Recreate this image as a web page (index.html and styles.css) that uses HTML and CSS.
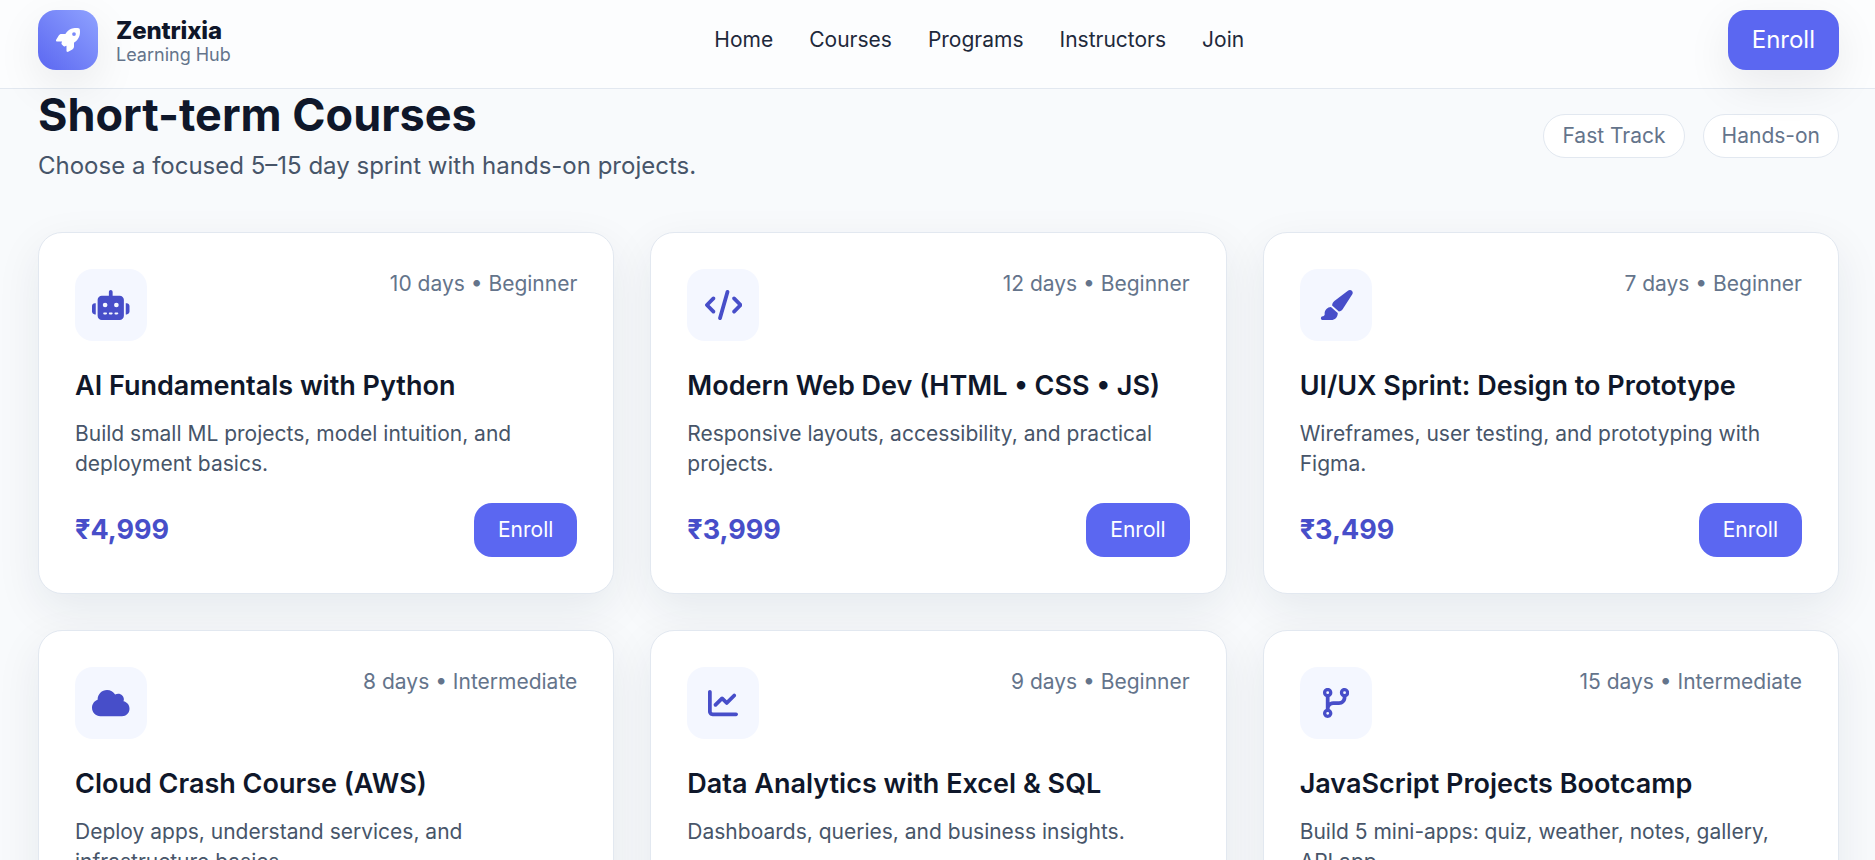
FILE: index.html
```html
<!DOCTYPE html>
<html lang="en">
<head>
<meta charset="utf-8">
<title>Zentrixia Learning Hub</title>
<link rel="stylesheet" href="styles.css">
</head>
<body>
<header class="header">
  <div class="container header-row">
    <a class="brand">
      <span class="logo"><svg viewBox="0 0 512 512" width="24" height="24"><path d="M156.6 384.9L125.7 354c-8.5-8.5-11.5-20.8-7.7-32.2c3-8.9 7-20.5 11.8-33.8L24 288c-8.6 0-16.6-4.6-20.9-12.1s-4.2-16.7 .2-24.1l52.5-88.5c13-21.9 36.5-35.3 61.9-35.3l82.3 0c2.4-4 4.8-7.7 7.2-11.3C289.1-4.1 411.1-8.1 483.9 5.3c11.6 2.1 20.6 11.2 22.8 22.8c13.4 72.9 9.3 194.8-111.4 276.7c-3.5 2.4-7.3 4.8-11.3 7.2v82.3c0 25.4-13.4 49-35.3 61.9l-88.5 52.5c-7.4 4.4-16.6 4.5-24.1 .2s-12.1-12.2-12.1-20.9V380.8c-14.1 4.9-26.4 8.9-35.7 11.9c-11.2 3.6-23.4 .5-31.8-7.8zM384 168a40 40 0 1 0 0-80 40 40 0 1 0 0 80z"/></svg></span>
      <span class="brand-text">
        <span class="brand-name">Zentrixia</span>
        <span class="brand-sub">Learning Hub</span>
      </span>
    </a>
    <nav class="nav">
      <a>Home</a><a>Courses</a><a>Programs</a><a>Instructors</a><a>Join</a>
    </nav>
    <button class="btn btn-lg">Enroll</button>
  </div>
</header>
<main class="container">
  <div class="section-head">
    <div>
      <h2 class="section-title">Short-term Courses</h2>
      <p class="section-sub">Choose a focused 5–15 day sprint with hands-on projects.</p>
    </div>
    <div class="chips"><span class="chip">Fast Track</span><span class="chip">Hands-on</span></div>
  </div>
  <div class="grid">
    <article class="card">
      <div class="card-top">
        <div class="icon"><svg viewBox="0 0 640 512"><path d="M320 0c17.7 0 32 14.3 32 32V96H472c39.8 0 72 32.2 72 72V440c0 39.8-32.2 72-72 72H168c-39.8 0-72-32.2-72-72V168c0-39.8 32.2-72 72-72H288V32c0-17.7 14.3-32 32-32zM208 384c-8.8 0-16 7.2-16 16s7.2 16 16 16h32c8.8 0 16-7.2 16-16s-7.2-16-16-16H208zm96 0c-8.8 0-16 7.2-16 16s7.2 16 16 16h32c8.8 0 16-7.2 16-16s-7.2-16-16-16H304zm96 0c-8.8 0-16 7.2-16 16s7.2 16 16 16h32c8.8 0 16-7.2 16-16s-7.2-16-16-16H400zM264 256a40 40 0 1 0 -80 0 40 40 0 1 0 80 0zm152 40a40 40 0 1 0 0-80 40 40 0 1 0 0 80zM48 224H64V416H48c-26.5 0-48-21.5-48-48V272c0-26.5 21.5-48 48-48zm544 0c26.5 0 48 21.5 48 48v96c0 26.5-21.5 48-48 48H576V224h16z"/></svg></div>
        <span class="meta">10 days • Beginner</span>
      </div>
      <h3 class="card-title">AI Fundamentals with Python</h3>
      <p class="card-desc">Build small ML projects, model intuition, and deployment basics.</p>
      <div class="card-foot"><span class="price">₹4,999</span><button class="btn">Enroll</button></div>
    </article>
    <article class="card">
      <div class="card-top">
        <div class="icon"><svg viewBox="0 0 640 512"><path d="M392.8 1.2c-17-4.9-34.7 5-39.6 22l-128 448c-4.9 17 5 34.7 22 39.6s34.7-5 39.6-22l128-448c4.9-17-5-34.7-22-39.6zm80.6 120.1c-12.5 12.5-12.5 32.8 0 45.3L562.7 256l-89.4 89.4c-12.5 12.5-12.5 32.8 0 45.3s32.8 12.5 45.3 0l112-112c12.5-12.5 12.5-32.8 0-45.3l-112-112c-12.5-12.5-32.8-12.5-45.3 0zm-306.7 0c-12.5-12.5-32.8-12.5-45.3 0l-112 112c-12.5 12.5-12.5 32.8 0 45.3l112 112c12.5 12.5 32.8 12.5 45.3 0s12.5-32.8 0-45.3L77.3 256l89.4-89.4c12.5-12.5 12.5-32.8 0-45.3z"/></svg></div>
        <span class="meta">12 days • Beginner</span>
      </div>
      <h3 class="card-title">Modern Web Dev (HTML • CSS • JS)</h3>
      <p class="card-desc">Responsive layouts, accessibility, and practical projects.</p>
      <div class="card-foot"><span class="price">₹3,999</span><button class="btn">Enroll</button></div>
    </article>
    <article class="card">
      <div class="card-top">
        <div class="icon"><svg viewBox="0 0 576 512"><path d="M339.3 367.1c27.3-3.9 51.9-19.4 67.2-42.9L568.2 74.1c12.6-19.5 9.4-45.3-7.6-61.2S517.7-4.4 499.1 9.6L262.4 187.2c-24 18-38.2 46.1-38.4 76.1L339.3 367.1zm-19.6 25.4l-116-104.4C143.9 290.3 96 339.6 96 400c0 3.9 .2 7.8 .6 11.6C98.4 429.1 86.4 448 68.8 448H64c-17.7 0-32 14.3-32 32s14.3 32 32 32H208c61.9 0 112-50.1 112-112c0-2.5-.1-5-.2-7.5z"/></svg></div>
        <span class="meta">7 days • Beginner</span>
      </div>
      <h3 class="card-title">UI/UX Sprint: Design to Prototype</h3>
      <p class="card-desc">Wireframes, user testing, and prototyping with Figma.</p>
      <div class="card-foot"><span class="price">₹3,499</span><button class="btn">Enroll</button></div>
    </article>
    <article class="card">
      <div class="card-top">
        <div class="icon"><svg viewBox="0 0 640 512"><path d="M0 336c0 79.5 64.5 144 144 144H512c70.7 0 128-57.3 128-128c0-61.9-44-113.6-102.4-125.4c4.1-10.7 6.4-22.4 6.4-34.6c0-53-43-96-96-96c-19.7 0-38.1 6-53.3 16.2C367 64.2 315.3 32 256 32C167.6 32 96 103.6 96 192c0 2.7 .1 5.4 .2 8.1C40.2 219.8 0 273.2 0 336z"/></svg></div>
        <span class="meta">8 days • Intermediate</span>
      </div>
      <h3 class="card-title">Cloud Crash Course (AWS)</h3>
      <p class="card-desc">Deploy apps, understand services, and infrastructure basics.</p>
    </article>
    <article class="card">
      <div class="card-top">
        <div class="icon"><svg viewBox="0 0 512 512"><path d="M64 64c0-17.7-14.3-32-32-32S0 46.3 0 64V400c0 44.2 35.8 80 80 80H480c17.7 0 32-14.3 32-32s-14.3-32-32-32H80c-8.8 0-16-7.2-16-16V64zm406.6 86.6c12.5-12.5 12.5-32.8 0-45.3s-32.8-12.5-45.3 0L320 210.7l-57.4-57.4c-12.5-12.5-32.8-12.5-45.3 0l-112 112c-12.5 12.5-12.5 32.8 0 45.3s32.8 12.5 45.3 0L240 221.3l57.4 57.4c12.5 12.5 32.8 12.5 45.3 0l128-128z"/></svg></div>
        <span class="meta">9 days • Beginner</span>
      </div>
      <h3 class="card-title">Data Analytics with Excel &amp; SQL</h3>
      <p class="card-desc">Dashboards, queries, and business insights.</p>
    </article>
    <article class="card">
      <div class="card-top">
        <div class="icon"><svg viewBox="0 0 448 512"><path d="M80 104a24 24 0 1 0 0-48 24 24 0 1 0 0 48zm80-24c0 32.8-19.7 61-48 73.3v87.8c18.8-10.9 40.7-17.1 64-17.1h96c35.3 0 64-28.7 64-64v-6.7C307.7 141 288 112.8 288 80c0-44.2 35.8-80 80-80s80 35.8 80 80c0 32.8-19.7 61-48 73.3V160c0 70.7-57.3 128-128 128H176c-35.3 0-64 28.7-64 64v6.7c28.3 12.3 48 40.5 48 73.3c0 44.2-35.8 80-80 80s-80-35.8-80-80c0-32.8 19.7-61 48-73.3V352 153.3C19.7 141 0 112.8 0 80C0 35.8 35.8 0 80 0s80 35.8 80 80zm232 0a24 24 0 1 0 -48 0 24 24 0 1 0 48 0zM80 456a24 24 0 1 0 0-48 24 24 0 1 0 0 48z"/></svg></div>
        <span class="meta">15 days • Intermediate</span>
      </div>
      <h3 class="card-title">JavaScript Projects Bootcamp</h3>
      <p class="card-desc">Build 5 mini-apps: quiz, weather, notes, gallery, API app.</p>
    </article>
  </div>
</main>
</body>
</html>
```
FILE: styles.css
```css
* { box-sizing: border-box; margin: 0; padding: 0; }
html { height: 100%; overflow: hidden; }
body {
  height: 860px;
  overflow: hidden;
  font-family: Inter, "Liberation Sans", sans-serif;
  font-size: 24px;
  line-height: 36px;
  color: #0f172a;
  background: #f8fafc;
}
.container { margin: 0 36px 0 38px; }
.header {
  position: relative;
  z-index: 2;
  height: 89px;
  padding-top: 10px;
  background: rgba(254, 254, 255, .75);
  border-bottom: 1px solid #e2e8f0;
}
.header-row { display: flex; align-items: center; justify-content: space-between; }
.brand { display: flex; align-items: center; gap: 18px; }
.logo {
  display: grid;
  place-items: center;
  width: 60px;
  height: 60px;
  border-radius: 18px;
  background: linear-gradient(to top right, #5b67f1, #8fa2ff);
  box-shadow: 0 15px 45px rgba(2, 6, 23, .08);
}
.logo svg { fill: #fff; }
.brand-text { display: flex; flex-direction: column; padding-top: 1px; }
.brand-name { font-weight: 800; line-height: 28px; letter-spacing: -.15px; }
.brand-sub { font-size: 18px; line-height: 19px; color: #64748b; }
.nav { display: flex; gap: 36px; font-size: 21px; line-height: 30px; color: #1e293b; }
.btn {
  border: 0;
  padding: 12px 24px;
  border-radius: 18px;
  font: 400 21px/30px Inter, "Liberation Sans", sans-serif;
  color: #fff;
  background: #5b67f1;
}
.btn-lg { font-size: 24px; line-height: 36px; box-shadow: 0 15px 45px rgba(2, 6, 23, .08); }
.section-head { display: flex; align-items: center; justify-content: space-between; height: 94px; }
.section-title { font-size: 45px; line-height: 54px; font-weight: 700; }
.section-sub { margin-top: 6px; color: #475569; }
.chips { display: flex; gap: 18px; }
.chip {
  padding: 6px 18px;
  border: 1px solid #e2e8f0;
  border-radius: 999px;
  background: #fff;
  font-size: 21px;
  line-height: 30px;
  color: #64748b;
}
.grid { display: grid; grid-template-columns: repeat(3, 1fr); grid-auto-rows: 362px; gap: 36px; margin-top: 49px; }
.card {
  padding: 36px;
  border: 1px solid #e2e8f0;
  border-radius: 24px;
  background: #fff;
  box-shadow: 0 15px 45px rgba(10, 37, 64, .08);
}
.card-top { display: flex; align-items: flex-start; justify-content: space-between; }
.icon { display: grid; place-items: center; width: 72px; height: 72px; border-radius: 18px; background: #f4f7ff; }
.icon svg { height: 30px; fill: #474ec9; }
.meta { font-size: 21px; line-height: 30px; color: #64748b; }
.card-title { margin-top: 24px; font-size: 27px; line-height: 42px; font-weight: 600; }
.card-desc { margin-top: 12px; font-size: 21px; line-height: 30px; color: #475569; }
.card-foot { display: flex; align-items: center; justify-content: space-between; margin-top: 24px; }
.price { font-size: 27px; line-height: 42px; font-weight: 700; color: #474ec9; }
```
